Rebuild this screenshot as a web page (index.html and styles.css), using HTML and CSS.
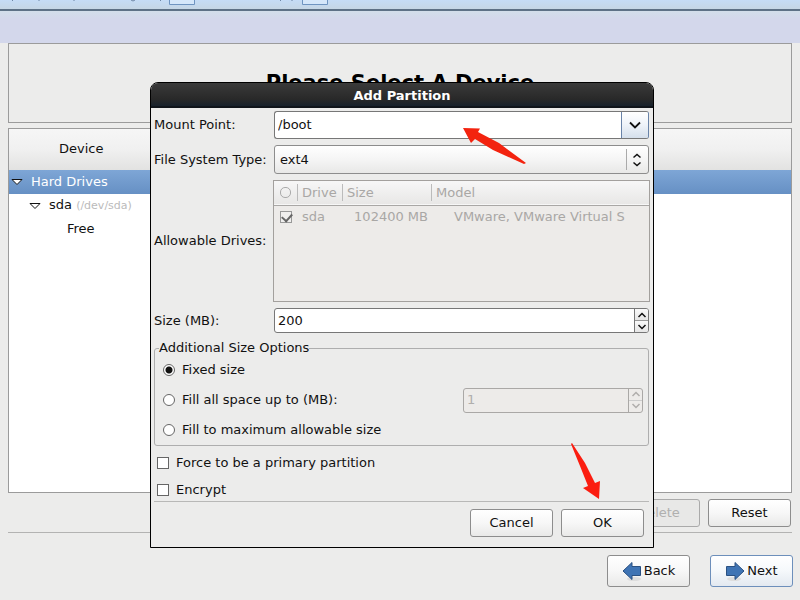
FILE: index.html
```
<!DOCTYPE html>
<html lang="en">
<head>
    <meta charset="utf-8">
    <title>Add Partition</title>
    <link rel="stylesheet" href="styles.css">
</head>
<body>
    <div class="hint-bar">
        <svg width="340" height="10" viewBox="0 0 340 10" aria-hidden="true">
            <path d="M13 0l-1 1M39 0v1M74 0v1M131 0q2 2 4 0M161 0l-1 1M281 0l-1 1M292 0v1" fill="none" stroke="#6f87a5"/>
            <path d="M169.500 0V4.500H194.500V0M302.500 0V4.500H327.500V0" fill="#d5e7fa" stroke="#6f94c0"/>
        </svg>
    </div>
    <div class="banner"></div>

    <main class="installer">
        <header class="page-title">
            <h1>Please Select A Device</h1>
        </header>

        <section class="device-list">
            <div class="list-header">Device</div>
            <div class="list-row selected">
                <svg class="expander" width="12" height="8" viewBox="0 0 12 8"><path d="M1 1.500H11L6 6.500Z" fill="#fff" stroke="#111"/></svg>
                <span>Hard Drives</span>
            </div>
            <div class="list-row level-1">
                <svg class="expander" width="12" height="8" viewBox="0 0 12 8"><path d="M1 1.500H11L6 6.500Z" fill="#fff" stroke="#111"/></svg>
                <span>sda <small>(/dev/sda)</small></span>
            </div>
            <div class="list-row level-2">Free</div>
        </section>

        <div class="list-actions">
            <button type="button" class="button" disabled>Delete</button>
            <button type="button" class="button">Reset</button>
        </div>

        <footer class="nav-actions">
            <button type="button" class="button nav">
                <svg width="20" height="20" viewBox="0 0 20 20"><ellipse cx="12" cy="18" rx="7" ry="2" fill="#ddd"/><path d="M1 10L10 1.500V5.500H18.500V14.500H10V18.500Z" fill="#3f74b4" stroke="#2b5182"/></svg>
                Back
            </button>
            <button type="button" class="button nav focused">
                <svg width="20" height="20" viewBox="0 0 20 20"><ellipse cx="9" cy="18" rx="7" ry="2" fill="#ddd"/><path d="M19 10L10 1.500V5.500H1.500V14.500H10V18.500Z" fill="#3f74b4" stroke="#2b5182"/></svg>
                Next
            </button>
        </footer>
    </main>

    <div class="overlay">
        <form class="dialog">
            <h2 class="dialog-title">Add Partition</h2>
            <div class="dialog-body">
                <div class="fields">
                    <label for="mountPoint">Mount Point:</label>
                    <div class="field combo">
                        <input type="text" id="mountPoint" value="/boot">
                        <button type="button" class="drop" aria-label="Show mount points">
                            <svg width="12" height="8" viewBox="0 0 12 8"><path d="M1 1.500L6 6.500L11 1.500" fill="none" stroke="#111" stroke-width="1.800"/></svg>
                        </button>
                    </div>

                    <label for="fsType">File System Type:</label>
                    <div class="select-wrap">
                        <select id="fsType">
                            <option>ext4</option>
                        </select>
                        <svg class="select-arrows" width="10" height="14" viewBox="0 0 10 14"><path d="M1.500 4.500L5 1.500L8.500 4.500M1.500 9.500L5 12.500L8.500 9.500" fill="none" stroke="#111" stroke-width="1.500"/></svg>
                    </div>

                    <span>Allowable Drives:</span>
                    <div class="drives">
                        <table>
                            <thead>
                                <tr>
                                    <th class="col-check"><span class="ring"></span></th>
                                    <th class="col-drive">Drive</th>
                                    <th class="col-size">Size</th>
                                    <th>Model</th>
                                </tr>
                            </thead>
                            <tbody>
                                <tr>
                                    <td class="col-check"><input type="checkbox" class="check" aria-label="sda" checked disabled></td>
                                    <td>sda</td>
                                    <td class="number">102400 MB</td>
                                    <td class="model">VMware, VMware Virtual S</td>
                                </tr>
                            </tbody>
                        </table>
                    </div>

                    <label for="size">Size (MB):</label>
                    <div class="field spin">
                        <input type="text" id="size" value="200">
                        <div class="spin-buttons">
                            <button type="button" aria-label="Increase size"><svg width="10" height="6" viewBox="0 0 10 6"><path d="M1.500 5L5 1.500L8.500 5" fill="none" stroke="currentColor" stroke-width="1.500"/></svg></button>
                            <button type="button" aria-label="Decrease size"><svg width="10" height="6" viewBox="0 0 10 6"><path d="M1.500 1L5 4.500L8.500 1" fill="none" stroke="currentColor" stroke-width="1.500"/></svg></button>
                        </div>
                    </div>
                </div>

                <fieldset class="size-options">
                    <legend>Additional Size Options</legend>
                    <div class="option">
                        <input type="radio" class="radio" name="sizeOption" id="fixed" checked>
                        <label for="fixed">Fixed size</label>
                    </div>
                    <div class="option">
                        <input type="radio" class="radio" name="sizeOption" id="fillUpTo">
                        <label for="fillUpTo">Fill all space up to (MB):</label>
                        <div class="field spin disabled">
                            <input type="text" aria-label="Maximum size" value="1" disabled>
                            <div class="spin-buttons">
                                <button type="button" aria-label="Increase maximum" disabled><svg width="10" height="6" viewBox="0 0 10 6"><path d="M1.500 5L5 1.500L8.500 5" fill="none" stroke="currentColor" stroke-width="1.500"/></svg></button>
                                <button type="button" aria-label="Decrease maximum" disabled><svg width="10" height="6" viewBox="0 0 10 6"><path d="M1.500 1L5 4.500L8.500 1" fill="none" stroke="currentColor" stroke-width="1.500"/></svg></button>
                            </div>
                        </div>
                    </div>
                    <div class="option">
                        <input type="radio" class="radio" name="sizeOption" id="fillMax">
                        <label for="fillMax">Fill to maximum allowable size</label>
                    </div>
                </fieldset>

                <div class="flags">
                    <div class="flag">
                        <input type="checkbox" class="check" id="primary">
                        <label for="primary">Force to be a primary partition</label>
                    </div>
                    <div class="flag">
                        <input type="checkbox" class="check" id="encrypt">
                        <label for="encrypt">Encrypt</label>
                    </div>
                </div>

                <div class="dialog-actions">
                    <button type="button" class="button">Cancel</button>
                    <button type="submit" class="button">OK</button>
                </div>
            </div>

            <svg class="pointer to-mount" width="64" height="37" viewBox="0 0 64 37" aria-hidden="true"><path d="M0 0L17 .5L15 4L36 15L63 35L61 36L30 22L12 11L8 15Z" fill="#f3230f"/></svg>
            <svg class="pointer to-ok" width="30" height="58" viewBox="0 0 30 58" aria-hidden="true"><path d="M1 0L14 20L24 40L29 38L28 56L12 45L17 43L9 23L0 1Z" fill="#fb1d10"/></svg>
        </form>
    </div>
</body>
</html>
```
FILE: styles.css
```
* {
    box-sizing: border-box;
}
body {
    display: flex;
    flex-direction: column;
    position: relative;
    height: 100vh;
    margin: 0;
    overflow: hidden;
    background-color: #ececeb;
    color: #111;
    font-family: "DejaVu Sans", sans-serif;
    font-size: 13px;
    line-height: 16px;
}
button,
input,
select {
    margin: 0;
    color: inherit;
    font: inherit;
}

/* Top of the screen */
.hint-bar {
    height: 11px;
    border-bottom: 2px solid #5d7186;
    background: linear-gradient(#c5dcf6, #c5d6e5);
}
.hint-bar svg {
    display: block;
}
.banner {
    height: 32px;
    background: linear-gradient(#d2deea, #d3d7eb 8px);
}

/* Installer page */
.installer {
    display: flex;
    flex: 1;
    flex-direction: column;
    padding: 0 8px 13px;
}
.page-title {
    height: 80px;
    padding-top: 26px;
    border: 1px solid #9b9b9b;
    text-align: center;
}
.page-title h1 {
    margin: 0;
    color: #000;
    font-size: 21px;
    line-height: 26px;
}
.device-list {
    flex: 1;
    margin-top: 5px;
    border: 1px solid #9b9b9b;
    background-color: #fff;
}
.list-header {
    height: 41px;
    padding-left: 50px;
    background: linear-gradient(#f6f6f6, #f0f0f0 50%, #e2e2e1);
    line-height: 40px;
}
.list-row {
    display: flex;
    align-items: center;
    gap: 8px;
    height: 23px;
    padding-left: 2px;
}
.list-row small {
    color: #bbb;
    font-size: 11px;
}
.list-row.selected {
    height: 24px;
    background: linear-gradient(#7ea6d6, #6690c4);
    color: #fff;
}
.list-row.level-1 {
    padding-left: 20px;
}
.list-row.level-2 {
    padding-left: 58px;
}
.list-actions {
    display: flex;
    justify-content: flex-end;
    gap: 8px;
    margin-top: 6px;
    padding: 0 1px 5px 0;
    border-bottom: 1px solid #b3b3b2;
}
.nav-actions {
    display: flex;
    justify-content: flex-end;
    gap: 20px;
    margin: 22px -1px 0 0;
}

.button {
    width: 83px;
    height: 28px;
    padding: 0;
    border: 1px solid #8d8d8d;
    border-radius: 3px;
    background: linear-gradient(#fff, #f7f7f7 50%, #e9e9e8);
    color: #111;
}
.button:disabled {
    border-color: #aaa;
    background: #e8e8e7;
    color: #b0b0af;
}
.button.nav {
    display: flex;
    align-items: center;
    justify-content: center;
    gap: 2px;
    height: 32px;
}
.button.focused {
    border-color: #6d8fbb;
    background: linear-gradient(#fff, #f5f8fb 50%, #e3e9f0);
}

/* Add Partition dialog */
.overlay {
    display: flex;
    align-items: flex-start;
    justify-content: center;
    position: absolute;
    inset: 0;
    padding: 82px 0 0 4px;
}
.dialog {
    position: relative;
    width: 504px;
    border: 1px solid #000;
    border-radius: 8px 8px 0 0;
    background-color: #ececeb;
}
.dialog-title {
    height: 25px;
    margin: 0;
    border-bottom: 2px solid #10151b;
    border-radius: 7px 7px 0 0;
    background: linear-gradient(#3a3a3a, #292929 70%, #18222c);
    color: #fff;
    font-size: 13px;
    line-height: 25px;
    text-align: center;
}
.dialog-body {
    padding: 3px 4px 10px 3px;
}
.fields {
    display: grid;
    grid-template-columns: 120px 1fr;
    grid-template-rows: 28px 29px 122px 25px;
    align-items: center;
    row-gap: 6px;
}
.fields > div {
    height: 100%;
}
.field {
    display: flex;
    border: 1px solid #777;
    border-radius: 3px;
    background-color: #fff;
    overflow: hidden;
}
.field input {
    flex: 1;
    min-width: 0;
    padding: 0 3px;
    border: 0;
    outline: 0;
    background: none;
}
.drop {
    width: 27px;
    padding: 0;
    border: 1px solid #6983a8;
    border-width: 0 0 0 1px;
    background: linear-gradient(#fff, #eef3f9 50%, #d5dfeb);
}
.combo {
    border-right-color: #6983a8;
}
.select-wrap {
    position: relative;
}
.select-wrap select {
    width: 100%;
    height: 100%;
    padding: 0 5px;
    border: 1px solid #8d8d8d;
    border-radius: 3px;
    appearance: none;
    background: linear-gradient(#fff, #f5f5f5 50%, #e8e8e7);
}
.select-wrap::after {
    content: "";
    position: absolute;
    top: 4px;
    right: 22px;
    bottom: 4px;
    border-left: 1px solid #aaa;
}
.select-arrows {
    position: absolute;
    top: 8px;
    right: 7px;
}

.drives {
    margin: 0 -1px;
    border: 1px solid #a3a09d;
    background-color: #edebe9;
    color: #a9a7a5;
}
.drives table {
    width: 100%;
    border-collapse: collapse;
    table-layout: fixed;
}
.drives tr {
    height: 24px;
}
.drives th,
.drives td {
    padding: 0 4px;
    font-weight: normal;
    text-align: left;
}
.drives th {
    background: linear-gradient(90deg, #bbb, #bbb) right center / 1px 17px no-repeat;
}
.drives th:last-child {
    background: none;
}
.drives thead {
    border-bottom: 1px solid #a9a7a5;
    background: linear-gradient(#f7f7f7, #e8e7e6);
}
.drives .col-check {
    width: 24px;
    padding: 0 6px;
}
.drives .col-check > * {
    display: block;
}
.col-drive {
    width: 45px;
}
.col-size {
    width: 89px;
}
.drives .number {
    text-align: right;
}
.drives .model {
    padding-left: 22px;
}
.ring {
    width: 11px;
    height: 11px;
    border: 1px solid #aaa;
    border-radius: 5px;
}

.spin-buttons {
    display: flex;
    flex-direction: column;
    width: 14px;
    border-left: 1px solid #777;
}
.spin-buttons button {
    display: flex;
    flex: 1;
    align-items: center;
    justify-content: center;
    min-height: 0;
    padding: 0;
    border: 0;
    background: linear-gradient(#fafafa, #e6e6e6);
    color: #111;
}
.spin-buttons button + button {
    border-top: 1px solid #999;
}
.field.disabled,
.disabled .spin-buttons {
    border-color: #aaa8a6;
}
.field.disabled {
    background-color: #edebe9;
    color: #b0aeac;
}
.disabled .spin-buttons button {
    border-color: #ccc;
    background: none;
    color: #b0aeac;
}

.size-options {
    min-width: 0;
    margin: 7px 0 0;
    padding: 0 0 1px;
    border: 1px solid #aeaeae;
    border-radius: 3px;
}
.size-options legend {
    margin-left: 4px;
    padding: 0;
}
.option {
    display: flex;
    align-items: center;
    gap: 7px;
    height: 28px;
    padding: 0 5px 0 8px;
}
.option + .option {
    margin-top: 2px;
}
.option .field {
    width: 180px;
    height: 25px;
    margin-left: auto;
}
.radio,
.check {
    flex: none;
    width: 12px;
    height: 12px;
    border: 1px solid #666;
    appearance: none;
    background-color: #fff;
}
.radio {
    border-radius: 50%;
}
.radio:checked {
    background: radial-gradient(circle, #111 3px, #fff 4px);
}
.check:disabled {
    border-color: #999;
    background-color: #f0efee;
}
.check:checked::before {
    content: "";
    display: block;
    width: 8px;
    height: 5px;
    margin: 1px;
    border: solid #666;
    border-width: 0 0 2px 2px;
    transform: rotate(-48deg);
}
.flags {
    display: grid;
    gap: 7px;
    padding: 7px 0 1px 3px;
    border-bottom: 1px solid #b8b8b7;
}
.flag {
    display: flex;
    align-items: center;
    gap: 7px;
    height: 20px;
}
.dialog-actions {
    display: flex;
    justify-content: flex-end;
    gap: 8px;
    margin-top: 7px;
    padding-right: 5px;
}

/* Red arrows over the form */
.pointer {
    position: absolute;
    pointer-events: none;
}
.to-mount {
    top: 45px;
    left: 312px;
}
.to-ok {
    top: 360px;
    left: 420px;
}
```
